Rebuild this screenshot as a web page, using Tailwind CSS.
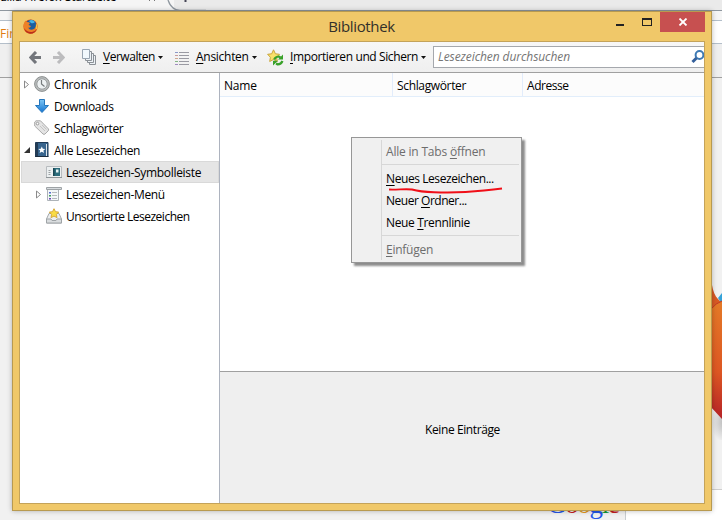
<!DOCTYPE html>
<html lang="de">
<head>
<meta charset="utf-8">
<title>Bibliothek</title>
<script src="https://cdn.jsdelivr.net/npm/@tailwindcss/browser@4"></script>
</head>
<body class="relative w-[722px] h-[520px] overflow-hidden bg-[#f1f1f1] font-['Open_Sans','Noto_Sans',sans-serif] text-[12px] leading-[16px] text-black whitespace-nowrap">

<!-- Browser behind the library window -->
<div class="flex flex-col h-[520px]">
  <div class="relative h-[11px] shrink-0 bg-[#eaeaea] border-b border-[#8f979f] overflow-hidden">
    <div class="w-[174px] h-[10px] bg-[#f5f5f5] overflow-hidden">
      <div class="-mt-[11px] -ml-[6px] tracking-[-0.2px]">ozilla Firefox-Startseite</div>
    </div>
    <svg class="absolute left-[146px] top-0" width="60" height="11" fill="none"><path d="M22 0C24 6 27 10 34 10.500H60" fill="none" stroke="#8f979f" stroke-width="1.300"/><path d="M3 0l1 1M9 0l-1 1" stroke="#777"/><path d="M39.500 0v2" stroke="#445" stroke-width="2"/></svg>
  </div>
  <div class="h-[9px] shrink-0 bg-[#f5f5f5]"></div>
  <div class="h-[24px] shrink-0 bg-white border-y border-[#b4bfca] text-[#e07c10] leading-[25px]">Firefox</div>
  <div class="h-[34px] shrink-0 bg-[#efefef] border-b border-[#a0a0a0]"></div>
  <div class="relative grow overflow-hidden bg-[#f1f1f1]">
    <svg class="absolute left-[702px] top-[192px]" width="20" height="170">
      <defs>
        <linearGradient id="bigfox" x1="0" y1="0" x2="0" y2="1"><stop offset="0" stop-color="#e47a27"/><stop offset=".6" stop-color="#dd5723"/><stop offset="1" stop-color="#b52227"/></linearGradient>
        <radialGradient id="foxshade"><stop offset="0" stop-color="#bbb"/><stop offset="1" stop-color="#f1f1f1"/></radialGradient>
      </defs>
      <ellipse cx="22" cy="152" rx="13" ry="20" fill="url(#foxshade)"/>
      <path d="M0 14L10 15C11 21 13 26 16 29L20 33V50H0Z" fill="#d85a24"/>
      <path d="M16 28L20 23V34Z" fill="#36a3d9"/>
      <path d="M8 40C13 34 17 32 20 31V149L8 136Z" fill="url(#bigfox)"/>
      <path d="M9 39Q14 33 20 31" stroke="#c03a25" fill="none"/>
    </svg>
  </div>
  <div class="flex h-[31px] shrink-0">
    <div class="relative w-[626px] border-r border-[#c8cccf] bg-[#f1f1f1] overflow-hidden">
      <div class="absolute left-[547px] top-[-5px] font-['Liberation_Serif',serif] text-[27px] leading-[40px] tracking-[-1.300px]"><span class="text-[#2455e8]">G</span><span class="text-[#c61c22]">o</span><span class="text-[#e69a1c]">o</span><span class="text-[#2455e8]">g</span><span class="text-[#169b36]">l</span><span class="text-[#c61c22]">e</span></div>
    </div>
    <div class="grow bg-white border-t border-[#cfcfcf]"></div>
  </div>
</div>

<!-- Library window -->
<div class="absolute left-[12px] top-[11px] w-[700px] h-[500px] flex flex-col bg-[#f0c869] border border-[#b89a50] shadow-[0_0_5px_rgba(0,0,0,0.28)]">
  <div class="relative flex h-[29px] shrink-0 justify-between">
    <svg class="mt-[7px] ml-[10px]" width="15" height="15" viewBox="0 0 15 15">
      <circle cx="7.500" cy="7.500" r="7" fill="#d94b20"/>
      <circle cx="8" cy="6" r="5.300" fill="#1d5d9e"/>
      <path d="M6 2Q9-.5 12 3Q10 5 8 4Z" fill="#46b4e6"/>
      <path d="M.5 6Q1 3 2.500 1.500L4 3Q6 3 7 4L5.500 6L8 7Q7 9.500 5 8.500Q7 12 11 10Q13.500 8 13 4Q15 7 14.300 10Q12 15 7 14.700Q0 14 .5 6Z" fill="#ee8126"/>
      <path d="M1 9Q4 13.500 9 13Q12 12.500 14 10Q12 15 7 14.700Q2 14 1 9Z" fill="#b92f1c"/>
      <path d="M13 4Q15 7 14 10L12.800 10Z" fill="#f8c740"/>
    </svg>
    <div class="absolute inset-x-0 top-[3px] text-center text-[15px] leading-[22px] tracking-[-0.35px] text-[#33302a] pr-[1px]">Bibliothek</div>
    <div class="relative flex mr-[6px] h-[20px]">
      <svg width="49" height="20" shape-rendering="crispEdges"><path d="M5 12h8v2H5z" fill="#222"/><path d="M31 6h10v8H31z" fill="#222"/><path d="M32 8h8v5h-8z" fill="#f0c869"/></svg>
      <div class="w-[45px] h-[20px] bg-[#c75050] flex items-center justify-center"><svg width="10" height="8"><path d="M1.500 .5L8.500 7.500M8.500 .5L1.500 7.500" stroke="#fff" stroke-width="1.800"/></svg></div>
    </div>
  </div>

  <div class="mx-[6px] mb-[6px] grow min-h-0 flex flex-col border border-[#c4a35a] bg-white overflow-hidden">
    <!-- Toolbar -->
    <div class="flex items-center h-[31px] shrink-0 border-b border-[#a0a0a0] bg-linear-to-b from-[#f7f7f7] to-[#efefef] overflow-hidden">
      <svg class="ml-[9px] shrink-0" width="12" height="13" viewBox="0 0 12 13"><path d="M7 1L1.800 6.500L7 12M2 6.500H12" fill="none" stroke="#73767c" stroke-width="3"/></svg>
      <svg class="ml-[12px] shrink-0" width="12" height="13" viewBox="0 0 12 13"><path d="M5 1L10.200 6.500L5 12M10 6.500H0" fill="none" stroke="#bcbcbe" stroke-width="3"/></svg>
      <svg class="ml-[17px] shrink-0" width="15" height="16" viewBox="0 0 15 16"><g stroke="#8b9096" fill="#edf2f6"><path d="M7.500 6.500h6v9h-6z"/><path d="M5.500 4.500h6v9h-6z"/><path d="M3.500 2.500h6v9h-6z"/><path d="M.5.500h7v9h-7z" fill="#f1f8fd" stroke="#98a5b2"/></g></svg>
      <div class="w-[52px] ml-[6px] tracking-[-0.48px]"><span class="underline underline-offset-2">V</span>erwalten</div>
      <svg class="ml-[3px] shrink-0" width="5" height="3"><path d="M0 0h5L2.500 3z" fill="#111"/></svg>
      <svg class="ml-[12px] mt-[2px] shrink-0" width="14" height="13" shape-rendering="crispEdges"><path d="M4 .5h10M4 3.500h10M4 6.500h10M4 9.500h10M4 12.500h10" stroke="#9a9aa2"/><path d="M0 .5h3" stroke="#8b98c8"/><path d="M0 3.500h3" stroke="#c89b9b"/><path d="M0 6.500h3" stroke="#d0a890"/><path d="M0 9.500h3" stroke="#83b584"/><path d="M0 12.500h3" stroke="#a08bc0"/></svg>
      <div class="w-[53px] ml-[7px] tracking-[-0.28px]"><span class="underline underline-offset-2">A</span>nsichten</div>
      <svg class="ml-[3px] shrink-0" width="5" height="3"><path d="M0 0h5L2.500 3z" fill="#111"/></svg>
      <svg class="ml-[10px] shrink-0" width="18" height="17" viewBox="0 0 18 17"><path d="M6.500 .8L8.400 4.800L12.500 5.300L9.600 8.300L10.300 12.500L6.500 10.500L2.700 12.500L3.400 8.300L.6 5.300L4.700 4.800Z" fill="#f8e16b" stroke="#c9a53c"/><path d="M7.200 10.500Q8.500 7.500 12 7.500L13.500 8.400M15.500 12Q14 15.500 10.500 15.300L9 14.500" fill="none" stroke="#38a129" stroke-width="2.200"/><path d="M16 5.500V10.500H11ZM6 16.500V11.700H11Z" fill="#38a129"/></svg>
      <div class="w-[128px] ml-[5px] tracking-[-0.39px]"><span class="underline underline-offset-2">I</span>mportieren und Sichern</div>
      <svg class="ml-[3px] shrink-0" width="5" height="3"><path d="M0 0h5L2.500 3z" fill="#111"/></svg>
      <div class="ml-[7px] -mr-[6px] grow h-[22px] flex items-center justify-between border border-[#a5a8ad] bg-white pl-[4px] pr-[4px]">
        <span class="italic text-[#757575] tracking-[-0.080px]">Lesezeichen durchsuchen</span>
        <svg class="shrink-0" width="14" height="14" viewBox="0 0 14 14"><circle cx="8.500" cy="5" r="3.900" fill="#fff" stroke="#3d79b3" stroke-width="2"/><path d="M5.500 8L1.500 12" stroke="#345f9b" stroke-width="3"/></svg>
      </div>
    </div>

    <div class="flex grow min-h-0">
      <!-- Sidebar -->
      <div class="w-[200px] shrink-0 border-r border-[#adb3bf] bg-white pl-[1px]">
        <div class="flex items-center h-[22px] pl-[3px]">
          <svg width="5" height="9"><path d="M.5 1L4.500 4.500L.5 8z" fill="#fff" stroke="#8a8a8a"/></svg>
          <svg class="ml-[5px]" width="16" height="16" viewBox="0 0 16 16"><circle cx="8" cy="8" r="7.400" fill="#b9bcbc" stroke="#8d9191"/><circle cx="8" cy="8" r="5.200" fill="#eef2f3" stroke="#999d9e"/><path d="M7.500 4v4l3 2.500" fill="none" stroke="#777c7e" stroke-width="1.200"/></svg>
          <span class="ml-[4px] pt-[2px] tracking-[-0.15px]">Chronik</span>
        </div>
        <div class="flex items-center h-[22px] pl-[13px]">
          <svg width="16" height="16" viewBox="0 0 16 16"><defs><linearGradient id="dl" x1="0" y1="0" x2="0" y2="1"><stop offset="0" stop-color="#7cc6f5"/><stop offset="1" stop-color="#1373d0"/></linearGradient></defs><path d="M5.500 1.500h5v6h4L8 14.500L1.500 7.500h4z" fill="url(#dl)" stroke="#2577bd"/></svg>
          <span class="ml-[4px] pt-[2px] tracking-[-0.33px]">Downloads</span>
        </div>
        <div class="flex items-center h-[22px] pl-[13px]">
          <svg width="16" height="16" viewBox="0 0 16 16"><path d="M.7 2L2 .8H6.500L14.500 9Q15 10 14 11L11 14Q10 14.800 9 14L.7 6Z" fill="#e4e4e4" stroke="#aaa"/><circle cx="3.500" cy="3.600" r="1.300" fill="#fff" stroke="#999"/><path d="M6 6l5 5M8 5l4.500 4.500" stroke="#c4c4c4"/></svg>
          <span class="ml-[4px] pt-[2px] tracking-[-0.32px]">Schlagwörter</span>
        </div>
        <div class="flex items-center h-[22px] pl-[3px]">
          <svg width="6" height="6"><path d="M6 0V6H0z" fill="#333"/></svg>
          <svg class="ml-[4px]" width="16" height="16" viewBox="0 0 16 16"><path d="M1.500 .5h12.500v14h-12.500z" fill="#37648d" stroke="#1f3a56"/><path d="M1 1h3v14H1z" fill="#233c55"/><path d="M12.500 2v12" stroke="#dce5ec"/><path d="M1.500 14.500h13" stroke="#1a2b3d"/><path d="M7.800 4.500l1 2.300 2.500.2-1.900 1.600.6 2.400-2.200-1.300-2.200 1.300.6-2.400L4.300 7l2.500-.2z" fill="#fff"/></svg>
          <span class="ml-[4px] pt-[2px] tracking-[-0.34px]">Alle Lesezeichen</span>
        </div>
        <div class="flex items-center h-[22px] pl-[24px] bg-[#e5e5e5] border border-[#d9d9d9]">
          <svg width="16" height="16" viewBox="0 0 16 16"><path d="M.5 2.500h15v11H.5z" fill="#eceff0" stroke="#b8bcbf"/><path d="M0 13.500h16" stroke="#8f9598"/><path d="M2.500 6.500h2M2.500 8.500h2M2.500 10.500h2" stroke="#9ba0a3"/><path d="M7 4h7v8H7z" fill="#2c6c7b"/><path d="M7 4h1.500v8H7z" fill="#194653"/><path d="M10 5.500h2.500v3H10z" fill="#e7f3f4"/></svg>
          <span class="ml-[4px] pt-[2px] tracking-[-0.32px]">Lesezeichen-Symbolleiste</span>
        </div>
        <div class="flex items-center h-[22px] pl-[15px]">
          <svg width="5" height="9"><path d="M.5 1L4.500 4.500L.5 8z" fill="#fff" stroke="#8a8a8a"/></svg>
          <svg class="ml-[5px]" width="16" height="16" viewBox="0 0 16 16"><path d="M1.500 2.500h11v12h-11z" fill="#f4f7f9" stroke="#adb3b8"/><path d="M.5 1.500h15v2H.5z" fill="#d8dcdf" stroke="#9ea3a6"/><path d="M3 6h2v1.500H3z" fill="#5a6fd0"/><path d="M3 9h2v1.500H3z" fill="#3c9c5f"/><path d="M3 12h2v1.500H3z" fill="#6b48b8"/><path d="M6 6.500h5M6 9.500h5M6 12.500h5" stroke="#b4b9bd"/></svg>
          <span class="ml-[4px] pt-[2px] tracking-[-0.33px]">Lesezeichen-Menü</span>
        </div>
        <div class="flex items-center h-[22px] pl-[25px]">
          <svg width="16" height="16" viewBox="0 0 16 16"><path d="M3 5.500H13L15.500 11v4H.5V11Z" fill="#eceeef" stroke="#a3a8ab"/><path d="M.5 11H5l1 1.500h4L11 11h4.500v4H.5z" fill="#d9dcde" stroke="#9fa4a7"/><path d="M8 .7l1.500 3 3.200.4-2.300 2.300.6 3.200L8 8.100 5 9.600l.6-3.200L3.300 4.100l3.200-.4z" fill="#f9dc44" stroke="#d2a32d" stroke-width=".9"/></svg>
          <span class="ml-[4px] pt-[2px] tracking-[-0.5px]">Unsortierte Lesezeichen</span>
        </div>
      </div>

      <!-- List and details -->
      <div class="grow flex flex-col">
        <div class="flex h-[24px] shrink-0 bg-[#fcfcfc] border-b border-[#e2eefb] leading-[25px]">
          <div class="w-[173px] pl-[4px] border-r border-[#e2ecfb] tracking-[-0.2px]">Name</div>
          <div class="w-[130px] pl-[4px] border-r border-[#e2ecfb] tracking-[-0.35px]">Schlagwörter</div>
          <div class="pl-[4px] tracking-[-0.45px]">Adresse</div>
        </div>
        <div class="grow bg-white"></div>
        <div class="h-[132px] shrink-0 bg-[#efefef] border-t border-[#a0a0a0] flex items-center justify-center pb-[16px] pl-px tracking-[-0.4px]">Keine Einträge</div>
      </div>
    </div>
  </div>
</div>

<!-- Context menu -->
<div class="absolute left-[351px] top-[137px] w-[171px] h-[126px] border border-[#979797] bg-[#f0f0f0] shadow-[3px_3px_2px_rgba(0,0,0,0.45)] flex py-[2px] pr-[2px]">
  <div class="w-[30px] shrink-0 border-r border-[#d7d7d7]"></div>
  <div class="grow leading-[22px]">
    <div class="h-[22px] mt-[1px] pl-[4px] text-[#6d6d6d] tracking-[-0.2px]">Alle in Tabs <span class="underline underline-offset-2">ö</span>ffnen</div>
    <div class="h-px bg-[#d7d7d7] mt-[1px] mb-[3px]"></div>
    <div class="h-[22px] pl-[4px] tracking-[-0.42px]"><span class="underline underline-offset-2">N</span>eues Lesezeichen...</div>
    <div class="h-[22px] pl-[4px] tracking-[-0.48px]">Neuer <span class="underline underline-offset-2">O</span>rdner...</div>
    <div class="h-[22px] pl-[4px] tracking-[-0.35px]">Neue <span class="underline underline-offset-2">T</span>rennlinie</div>
    <div class="h-px bg-[#d7d7d7] mt-[1px] mb-[3px]"></div>
    <div class="h-[22px] pl-[4px] text-[#6d6d6d] tracking-[-0.25px]"><span class="underline underline-offset-2">E</span>infügen</div>
  </div>
  <svg class="absolute left-[36px] top-[49px]" width="116" height="8"><path d="M1 2.500C9 3 18 1.500 24 2.500C31 4.500 38 5 46 5.200C64 6 82 5 96 3.500Q106 2.500 114 1.500" fill="none" stroke="#f00f18" stroke-width="1.900"/></svg>
</div>
</body>
</html>
